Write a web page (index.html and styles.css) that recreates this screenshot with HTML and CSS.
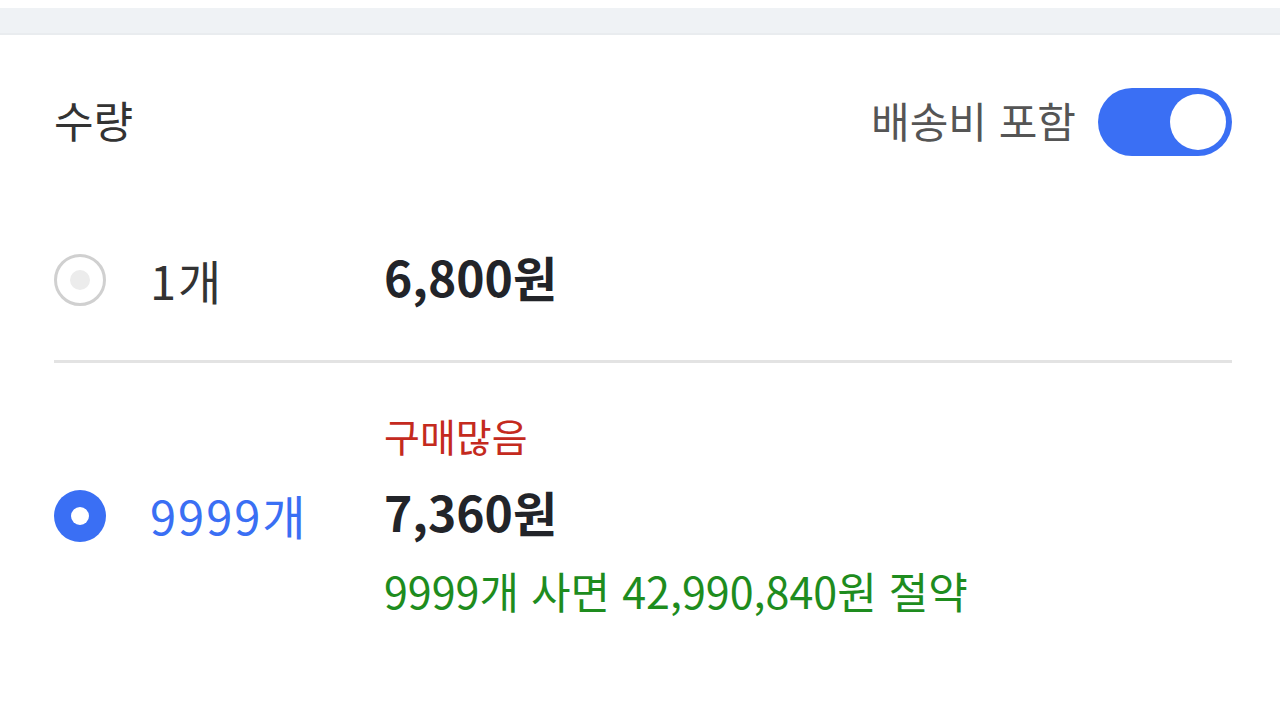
FILE: index.html
```html
<!DOCTYPE html>
<html lang="ko">
<head>
<meta charset="utf-8">
<link rel="stylesheet" href="styles.css">
</head>
<body>
<div class="topband"></div>
<div class="panel">
  <div class="header">
    <div class="title">수량</div>
    <div class="ship">
      <span class="ship-label">배송비 포함</span>
      <span class="toggle"><span class="knob"></span></span>
    </div>
  </div>
  <div class="option first">
    <span class="radio off"><span class="dot"></span></span>
    <span class="qty">1개</span>
    <div class="prices">
      <div class="price">6,800원</div>
    </div>
  </div>
  <div class="divider"></div>
  <div class="option second">
    <span class="radio on"><span class="dot"></span></span>
    <span class="qty sel">9999개</span>
    <div class="prices">
      <div class="badge">구매많음</div>
      <div class="price">7,360원</div>
      <div class="save">9999개 사면 42,990,840원 절약</div>
    </div>
  </div>
</div>
</body>
</html>
```

FILE: styles.css
```css
html, body {
  margin: 0;
  padding: 0;
  background: #ffffff;
  font-family: "Noto Sans CJK KR", "Noto Sans", sans-serif;
}
.topband {
  margin-top: 8px;
  height: 25px;
  background: #eff2f5;
  border-bottom: 2px solid #e9ecef;
}
.panel {
  padding: 0 48px 0 54px;
}
.header {
  display: flex;
  align-items: center;
  justify-content: space-between;
  height: 68px;
  margin-top: 53px;
}
.title {
  font-size: 43px;
  line-height: 60px;
  color: #333333;
  margin-top: -6px;
}
.ship {
  display: flex;
  align-items: center;
  gap: 22px;
}
.ship-label {
  font-size: 42px;
  line-height: 60px;
  color: #555555;
  margin-top: -4px;
}
.toggle {
  width: 134px;
  height: 68px;
  border-radius: 34px;
  background: #3a6ff4;
  display: flex;
  align-items: center;
  justify-content: flex-end;
  padding-right: 6px;
  box-sizing: border-box;
}
.knob {
  width: 56px;
  height: 56px;
  border-radius: 50%;
  background: #ffffff;
}
.option {
  display: flex;
  align-items: center;
}
.option.first {
  margin-top: 88px;
  height: 72px;
}
.option.second {
  margin-top: 36px;
}
.radio {
  width: 52px;
  height: 52px;
  border-radius: 50%;
  box-sizing: border-box;
  display: flex;
  align-items: center;
  justify-content: center;
  flex-shrink: 0;
}
.second .radio {
  margin-top: 4px;
}
.radio.off {
  border: 3px solid #d0d0d0;
  background: #fff;
}
.radio.off .dot {
  width: 20px;
  height: 20px;
  border-radius: 50%;
  background: #ececec;
}
.radio.on {
  background: #3a6ff4;
}
.radio.on .dot {
  width: 18px;
  height: 18px;
  border-radius: 50%;
  background: #ffffff;
}
.qty {
  width: 234px;
  margin-left: 44px;
  font-size: 47px;
  line-height: 72px;
  letter-spacing: 2px;
  color: #333333;
  flex-shrink: 0;
}
.second .qty {
  margin-top: 2px;
}
.qty.sel {
  color: #3a6ff4;
}
.prices {
  display: flex;
  flex-direction: column;
}
.price {
  font-size: 48px;
  font-weight: 700;
  color: #222429;
  line-height: 80px;
}
.first .price {
  line-height: 72px;
  margin-top: -8px;
}
.badge {
  font-size: 39px;
  color: #c42a1e;
  line-height: 72px;
}
.save {
  font-size: 43px;
  color: #1e8c1e;
  line-height: 78px;
}
.divider {
  height: 3px;
  background: #e3e3e3;
  margin-top: 44px;
}
```
